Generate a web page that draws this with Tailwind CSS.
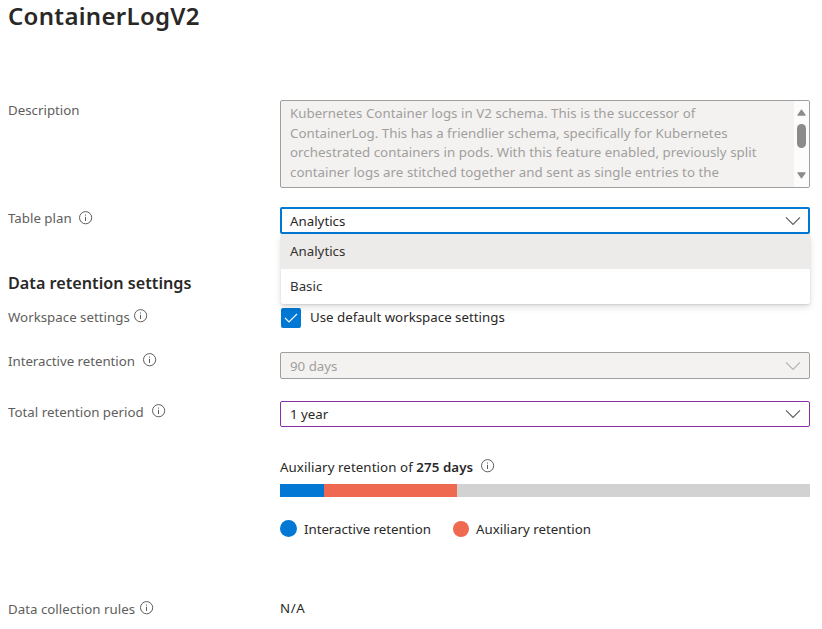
<!DOCTYPE html>
<html lang="en">
<head>
<meta charset="utf-8">
<title>ContainerLogV2</title>
<script src="https://cdn.jsdelivr.net/npm/@tailwindcss/browser@4"></script>
</head>
<body class="bg-white">
<svg class="hidden">
  <symbol id="info" viewBox="0 0 14 14"><circle cx="6.6" cy="6.7" r="6.1" fill="none" stroke="currentColor" stroke-width="1"/><path d="M6.5 5.8v4.2M6.5 3.5v1.1" stroke="currentColor" stroke-width="1"/></symbol>
  <symbol id="chevron" viewBox="0 0 16 10"><path d="M1 1.4l7 7 7-7" fill="none" stroke="currentColor" stroke-width="1.2"/></symbol>
</svg>
<main class="w-[822px] h-[629px] overflow-hidden pl-2 pr-3 flex flex-col text-[13.3px] leading-5 text-[#292827] font-['Noto_Sans','Open_Sans',sans-serif]">
  <h1 class="h-[34px] shrink-0 text-[24px] leading-[32px] font-semibold tracking-[0.3px]"><span>ContainerLogV2</span></h1>

  <section class="flex mt-[66px] h-[88px] shrink-0">
    <div class="w-[272px] text-[#605e5c]"><span>Description</span></div>
    <div class="flex w-[530px] border border-[#a19f9d] rounded-[2px] bg-[#f3f2f1] overflow-hidden">
      <p class="flex-1 pl-[9px] pt-[3px] leading-[19.7px] tracking-[0.04px] text-[#a19f9d] whitespace-nowrap"><span>Kubernetes Container logs in V2 schema. This is the successor of</span><br><span class="tracking-normal">ContainerLog. This has a friendlier schema, specifically for Kubernetes</span><br><span>orchestrated containers in pods. With this feature enabled, previously split</span><br><span>container logs are stitched together and sent as single entries to the</span></p>
      <div class="w-[15px] bg-[#fcfcfc] flex flex-col items-center pt-2 pb-2 text-[#8b8b8b]">
        <svg class="w-[9px] h-[7px]" viewBox="0 0 9 7"><path d="M4.5 .8L8.3 6.2H.7z" fill="currentColor" stroke="currentColor" stroke-linejoin="round"/></svg>
        <div class="mt-2 w-[9px] h-6 rounded-full bg-[#8b8b8b]"></div>
        <svg class="w-[9px] h-[7px] mt-auto" viewBox="0 0 9 7"><path d="M4.5 6.2L8.3 .8H.7z" fill="currentColor" stroke="currentColor" stroke-linejoin="round"/></svg>
      </div>
    </div>
  </section>

  <section class="flex mt-[19px] h-[27px] shrink-0">
    <div class="w-[272px] flex pt-px text-[#605e5c]"><span class="w-[71px] whitespace-nowrap"><span>Table plan</span></span><svg class="size-[14px] mt-[3px]"><use href="#info"/></svg></div>
    <div class="relative w-[530px] flex items-center justify-between border-2 border-[#0078d4] rounded-[2px] pl-2 pr-[7px]">
      <span>Analytics</span><svg class="w-4 h-[10px] text-[#605e5c]"><use href="#chevron"/></svg>
      <ul class="absolute z-10 left-[-1px] top-[25px] w-[529px] rounded-b-[2px] bg-white shadow-[0_3px_7px_rgba(0,0,0,0.13),0_1px_2px_rgba(0,0,0,0.11)] text-[#323130]">
        <li class="h-[35px] leading-[34px] pl-[9px] bg-[#edebe9]"><span>Analytics</span></li>
        <li class="h-[35px] leading-[34px] pl-[9px]"><span>Basic</span></li>
      </ul>
    </div>
  </section>

  <h2 class="mt-[37px] h-6 shrink-0 text-[16.2px] leading-6 font-semibold"><span>Data retention settings</span></h2>

  <section class="flex mt-[13px] h-5 shrink-0">
    <div class="w-[273px] flex text-[#605e5c]"><span class="w-[126px] leading-[18px] whitespace-nowrap"><span>Workspace settings</span></span><svg class="size-[14px] mt-px"><use href="#info"/></svg></div>
    <div class="size-5 rounded-[2px] bg-[#0078d4] flex items-center justify-center"><svg class="w-[14px] h-[10px]" viewBox="0 0 14 10"><path d="M1 5l4 4 8-8" fill="none" stroke="#fff" stroke-width="1.1"/></svg></div>
    <span class="ml-[9px] leading-[18px]"><span>Use default workspace settings</span></span>
  </section>

  <section class="flex mt-6 h-[27px] shrink-0">
    <div class="w-[272px] flex text-[#605e5c]"><span class="w-[135px] leading-[18px] tracking-[-0.04px] whitespace-nowrap"><span>Interactive retention</span></span><svg class="size-[14px] mt-px"><use href="#info"/></svg></div>
    <div class="w-[530px] flex items-center justify-between border border-[#a19f9d] rounded-[2px] bg-[#f3f2f1] text-[#a19f9d] pl-[9px] pr-2"><span>90 days</span><svg class="w-4 h-[10px] text-[#b5b3b1]"><use href="#chevron"/></svg></div>
  </section>

  <section class="flex mt-[22px] h-[26px] shrink-0">
    <div class="w-[272px] flex text-[#605e5c]"><span class="w-[144px] leading-[22px] whitespace-nowrap"><span>Total retention period</span></span><svg class="size-[14px] mt-[3px]"><use href="#info"/></svg></div>
    <div class="w-[530px] flex items-center justify-between border border-[#8a2da5] rounded-[2px] pl-[9px] pr-2"><span>1 year</span><svg class="w-4 h-[10px] text-[#605e5c]"><use href="#chevron"/></svg></div>
  </section>

  <section class="ml-[272px] mt-[30px] w-[530px] shrink-0">
    <div class="flex h-5"><span class="w-[201px] tracking-[0.08px] whitespace-nowrap"><span>Auxiliary retention of </span><span class="font-semibold">275 days</span></span><svg class="size-[14px] mt-[2px] text-[#605e5c]"><use href="#info"/></svg></div>
    <div class="mt-[7px] flex h-[13px] bg-[#d2d2d2]"><div class="w-11 bg-[#0078d4]"></div><div class="w-[133px] bg-[#ef6950]"></div></div>
    <div class="mt-[22px] flex h-5 items-center"><i class="size-[17px] -mt-px rounded-full bg-[#0078d4]"></i><span class="ml-[7px] w-[149px] tracking-[-0.04px]"><span>Interactive retention</span></span><i class="size-4 -mt-px rounded-full bg-[#ef6950]"></i><span class="ml-[7px]"><span>Auxiliary retention</span></span></div>
  </section>

  <section class="flex mt-[59px] h-5 shrink-0">
    <div class="w-[272px] flex text-[#605e5c]"><span class="w-[132px] leading-[22px] whitespace-nowrap"><span>Data collection rules</span></span><svg class="size-[14px] mt-[3px]"><use href="#info"/></svg></div>
    <span class="tracking-[0.6px]">N/A</span>
  </section>
</main>
</body>
</html>
